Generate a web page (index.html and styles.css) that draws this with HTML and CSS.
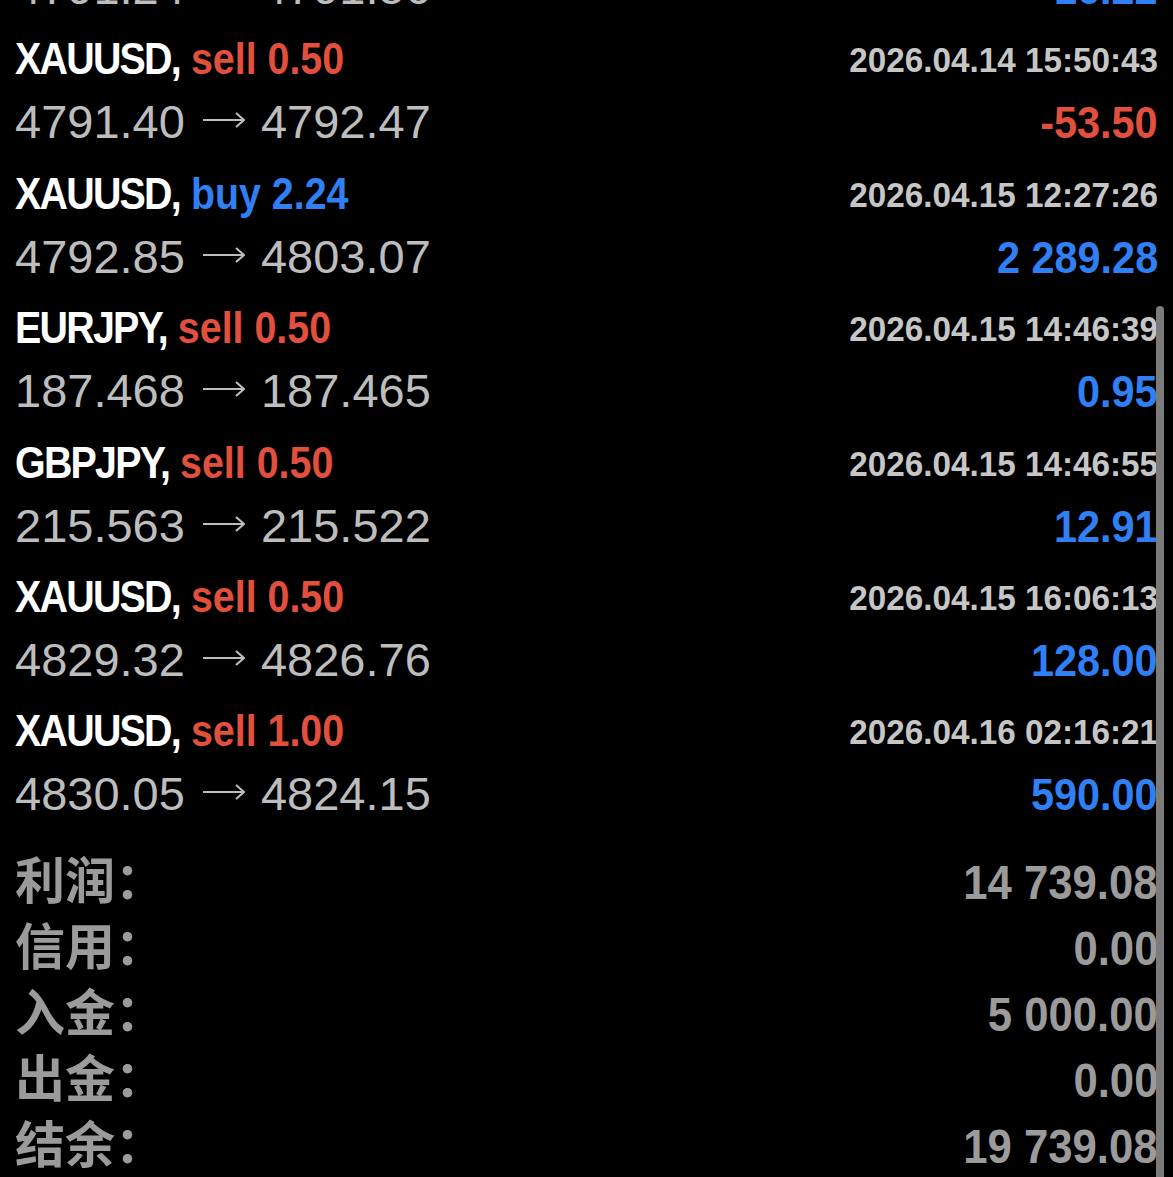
FILE: index.html
```html
<!DOCTYPE html>
<html lang="zh">
<head>
    <meta charset="UTF-8">
    <meta name="viewport" content="width=device-width, initial-scale=1.0">
    <title>交易历史</title>
    <link rel="stylesheet" href="styles.css">
</head>
<body>
    <div class="history">
        <div class="deals">
            <div class="deal">
                <div class="deal-head">
                    <div class="deal-name"><span class="symbol">XAUUSD,</span> <span class="buy">buy 1.00</span></div>
                    <div class="deal-time">2026.04.14 11:02:17</div>
                </div>
                <div class="deal-body">
                    <div class="deal-prices"><span>4791.24</span><svg class="arrow" viewBox="0 0 43 16"><path d="M1 8H42M34 1L42 8L34 15"/></svg><span>4791.56</span></div>
                    <div class="deal-profit buy">16.22</div>
                </div>
            </div>
            <div class="deal">
                <div class="deal-head">
                    <div class="deal-name"><span class="symbol">XAUUSD,</span> <span class="sell">sell 0.50</span></div>
                    <div class="deal-time">2026.04.14 15:50:43</div>
                </div>
                <div class="deal-body">
                    <div class="deal-prices"><span>4791.40</span><svg class="arrow" viewBox="0 0 43 16"><path d="M1 8H42M34 1L42 8L34 15"/></svg><span>4792.47</span></div>
                    <div class="deal-profit sell">-53.50</div>
                </div>
            </div>
            <div class="deal">
                <div class="deal-head">
                    <div class="deal-name"><span class="symbol">XAUUSD,</span> <span class="buy">buy 2.24</span></div>
                    <div class="deal-time">2026.04.15 12:27:26</div>
                </div>
                <div class="deal-body">
                    <div class="deal-prices"><span>4792.85</span><svg class="arrow" viewBox="0 0 43 16"><path d="M1 8H42M34 1L42 8L34 15"/></svg><span>4803.07</span></div>
                    <div class="deal-profit buy">2 289.28</div>
                </div>
            </div>
            <div class="deal">
                <div class="deal-head">
                    <div class="deal-name"><span class="symbol">EURJPY,</span> <span class="sell">sell 0.50</span></div>
                    <div class="deal-time">2026.04.15 14:46:39</div>
                </div>
                <div class="deal-body">
                    <div class="deal-prices"><span>187.468</span><svg class="arrow" viewBox="0 0 43 16"><path d="M1 8H42M34 1L42 8L34 15"/></svg><span>187.465</span></div>
                    <div class="deal-profit buy">0.95</div>
                </div>
            </div>
            <div class="deal">
                <div class="deal-head">
                    <div class="deal-name"><span class="symbol">GBPJPY,</span> <span class="sell">sell 0.50</span></div>
                    <div class="deal-time">2026.04.15 14:46:55</div>
                </div>
                <div class="deal-body">
                    <div class="deal-prices"><span>215.563</span><svg class="arrow" viewBox="0 0 43 16"><path d="M1 8H42M34 1L42 8L34 15"/></svg><span>215.522</span></div>
                    <div class="deal-profit buy">12.91</div>
                </div>
            </div>
            <div class="deal">
                <div class="deal-head">
                    <div class="deal-name"><span class="symbol">XAUUSD,</span> <span class="sell">sell 0.50</span></div>
                    <div class="deal-time">2026.04.15 16:06:13</div>
                </div>
                <div class="deal-body">
                    <div class="deal-prices"><span>4829.32</span><svg class="arrow" viewBox="0 0 43 16"><path d="M1 8H42M34 1L42 8L34 15"/></svg><span>4826.76</span></div>
                    <div class="deal-profit buy">128.00</div>
                </div>
            </div>
            <div class="deal">
                <div class="deal-head">
                    <div class="deal-name"><span class="symbol">XAUUSD,</span> <span class="sell">sell 1.00</span></div>
                    <div class="deal-time">2026.04.16 02:16:21</div>
                </div>
                <div class="deal-body">
                    <div class="deal-prices"><span>4830.05</span><svg class="arrow" viewBox="0 0 43 16"><path d="M1 8H42M34 1L42 8L34 15"/></svg><span>4824.15</span></div>
                    <div class="deal-profit buy">590.00</div>
                </div>
            </div>
        </div>

        <div class="summary">
            <div class="summary-row"><span class="summary-label">利润：</span><span class="summary-value">14 739.08</span></div>
            <div class="summary-row"><span class="summary-label">信用：</span><span class="summary-value">0.00</span></div>
            <div class="summary-row"><span class="summary-label">入金：</span><span class="summary-value">5 000.00</span></div>
            <div class="summary-row"><span class="summary-label">出金：</span><span class="summary-value">0.00</span></div>
            <div class="summary-row"><span class="summary-label">结余：</span><span class="summary-value">19 739.08</span></div>
        </div>
    </div>
    <div class="scrollbar"></div>
</body>
</html>
```

FILE: styles.css
```css
body {
    margin: 0;
    background-color: #000;
    font-family: "Liberation Sans", Arial, sans-serif;
    overflow: hidden;
    height: 1177px;
}
.history {
    padding: 0 15px;
}
.deals {
    margin-top: -101px;
}
.deal {
    display: flex;
    flex-direction: column;
    gap: 11px;
    height: 134.4px;
}
.deal-head {
    display: flex;
    justify-content: space-between;
    align-items: flex-start;
    height: 52px;
}
/* no condensed face is installed, so the bold figures are squeezed */
.deal-name {
    font-weight: bold;
    font-size: 45px;
    line-height: 52px;
    color: #fff;
    white-space: nowrap;
    transform: scaleX(0.875);
    transform-origin: left;
}
.symbol {
    letter-spacing: -2px;
}
.deal-time {
    font-weight: bold;
    font-size: 35px;
    line-height: 53px;
    color: #c6c6c6;
    white-space: nowrap;
    transform: scaleX(0.95);
    transform-origin: right;
}
.deal-body {
    display: flex;
    justify-content: space-between;
    align-items: baseline;
    height: 52px;
    line-height: 52px;
}
.deal-prices {
    font-size: 47px;
    color: #bdbdbd;
    white-space: nowrap;
}
.arrow {
    width: 43px;
    height: 16px;
    margin: 0 16px 0 17px;
    vertical-align: 10px;
    fill: none;
    stroke: #bdbdbd;
    stroke-width: 2.2;
}
.deal-profit {
    font-weight: bold;
    font-size: 45px;
    white-space: nowrap;
    transform: scaleX(0.92);
    transform-origin: right;
}
.sell {
    color: #e2503d;
}
.buy {
    color: #2f80f5;
}
.summary {
    margin-top: 4px;
}
.summary-row {
    display: flex;
    justify-content: space-between;
    align-items: baseline;
    height: 66px;
    line-height: 66px;
    color: #9b9b9b;
}
.summary-label {
    font-family: "Noto Sans CJK SC", "Liberation Sans", sans-serif;
    font-weight: bold;
    font-size: 50px;
}
.summary-value {
    font-weight: bold;
    font-size: 48px;
    white-space: nowrap;
    transform: scaleX(0.91);
    transform-origin: right;
}
.scrollbar {
    position: absolute;
    left: 1156px;
    top: 306px;
    width: 8px;
    height: 900px;
    border-radius: 4px;
    background: #7b7b7b;
}
```
